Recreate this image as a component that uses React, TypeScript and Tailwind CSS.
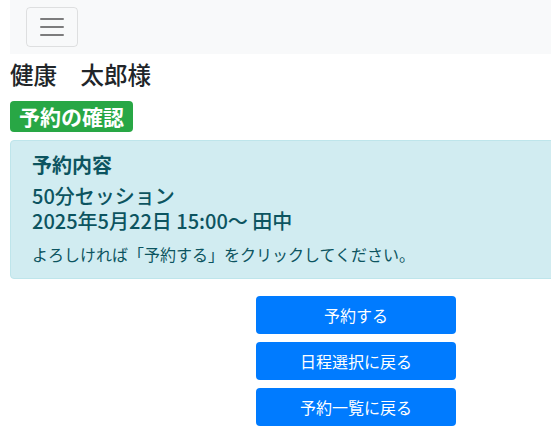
const font = { fontFamily: '"Noto Sans CJK JP", "Noto Sans", sans-serif' };

const Toggler = () => (
  <button className="flex h-[40px] w-[52px] items-center justify-center rounded border border-black/10">
    <svg width="30" height="30" viewBox="0 0 30 30">
      <path d="M4 7h22M4 15h22M4 23h22" stroke="rgba(0,0,0,0.5)" strokeWidth="2" strokeLinecap="round" />
    </svg>
  </button>
);

export default function App() {
  return (
    <div className="overflow-hidden bg-white text-[#212529]" style={font}>
      <div className="ml-[10px] w-[692px]">
        <nav className="flex h-[54px] items-center bg-[#f8f9fa] px-4">
          <Toggler />
        </nav>

        <h4 className="mt-[6px] text-[23.5px] font-medium leading-[1.2]">健康　太郎様</h4>

        <h3 className="mt-[9px] text-[28px] leading-[1.2]">
          <span className="inline-block rounded bg-[#28a745] px-[9px] py-[5px] text-[21px] font-bold leading-none text-white">
            予約の確認
          </span>
        </h3>

        <div className="mt-[8px] rounded border border-[#bee5eb] bg-[#d1ecf1] px-[21px] py-[12px] text-[#0c5460]">
          <h5 className="text-[20px] font-bold leading-[1.2]">予約内容</h5>
          <div className="mt-[6px] text-[20px] font-medium leading-[1.25]">
            <div>50分セッション</div>
            <div>2025年5月22日 15:00〜 田中</div>
          </div>
          <p className="mt-[9px] text-[16px] leading-[1.5]">よろしければ「予約する」をクリックしてください。</p>
        </div>

        <div className="mx-auto mt-[17px] flex w-[200px] flex-col gap-[8px]">
          <button className="h-[38px] rounded bg-[#007bff] text-[16px] text-white">予約する</button>
          <button className="h-[38px] rounded bg-[#007bff] text-[16px] text-white">日程選択に戻る</button>
          <button className="h-[38px] rounded bg-[#007bff] text-[16px] text-white">予約一覧に戻る</button>
        </div>
      </div>
    </div>
  );
}
